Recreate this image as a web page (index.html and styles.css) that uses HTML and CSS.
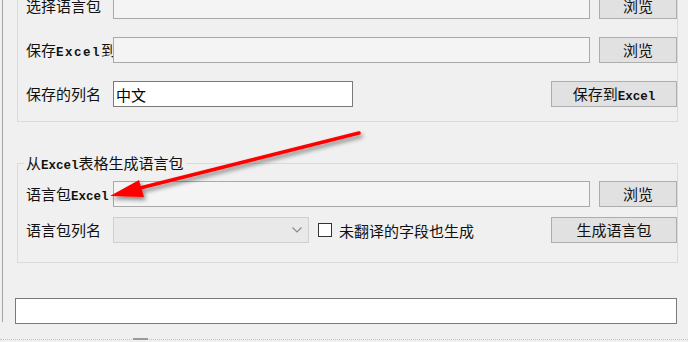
FILE: index.html
```html
<!DOCTYPE html>
<html lang="zh-CN">
<head>
    <meta charset="UTF-8">
    <meta name="viewport" content="width=device-width, initial-scale=1.0">
    <title>语言包工具</title>
    <link rel="stylesheet" href="styles.css">
</head>
<body>
    <div class="window">
        <fieldset class="group group-top">
            <div class="row">
                <span class="label">选择语言包</span>
                <div class="field"></div>
                <button class="btn">浏览</button>
            </div>
            <div class="row">
                <span class="label">保存<span class="latin latin-wide">Excel</span>到</span>
                <div class="field"></div>
                <button class="btn">浏览</button>
            </div>
            <div class="row">
                <span class="label">保存的列名</span>
                <input class="field field-white" type="text" value="中文">
                <button class="btn btn-wide">保存到<span class="latin">Excel</span></button>
            </div>
        </fieldset>

        <fieldset class="group group-gen">
            <legend>从<span class="latin">Excel</span>表格生成语言包</legend>
            <div class="row">
                <span class="label">语言包<span class="latin">Excel</span></span>
                <div class="field"></div>
                <button class="btn">浏览</button>
            </div>
            <div class="row">
                <span class="label">语言包列名</span>
                <div class="combo">
                    <svg width="10" height="6" viewBox="0 0 10 6"><path d="M0.5 0.5 L5 5 L9.5 0.5" fill="none" stroke="#8a8a8a" stroke-width="1.2"/></svg>
                </div>
                <span class="check"></span>
                <span class="check-label">未翻译的字段也生成</span>
                <button class="btn btn-wide">生成语言包</button>
            </div>
        </fieldset>

        <div class="status"></div>
        <div class="statusbar"><span class="grip"></span></div>
    </div>

    <!-- annotation arrow drawn over the form -->
    <svg class="arrow" width="688" height="342" viewBox="0 0 688 342">
        <defs>
            <filter id="shadow" x="-10%" y="-50%" width="120%" height="200%">
                <feDropShadow dx="2" dy="3" stdDeviation="2" flood-color="#000" flood-opacity="0.45"/>
            </filter>
        </defs>
        <g filter="url(#shadow)">
            <line x1="359" y1="133" x2="136" y2="189" stroke="#ff0000" stroke-width="3.5" stroke-linecap="round"/>
            <polygon points="110,196 139,180 144,197" fill="#ff0000"/>
        </g>
    </svg>
</body>
</html>
```

FILE: styles.css
```css
* {
    box-sizing: border-box;
}
html, body {
    margin: 0;
    height: 100%;
    overflow: hidden;
}
body {
    position: relative;
    background: #f0f0f0;
    font-family: "Noto Sans CJK SC", "Noto Sans", sans-serif;
    font-size: 15px;
    color: #111;
}
.window {
    height: 342px;
    margin-left: 2px;
    border-left: 1px solid #a3a3a3;
    padding-left: 14px;
}
.group {
    width: 661px;
    min-width: 0;
    margin: 0;
    border: 1px solid #dadada;
    padding: 0 0 0 8px;
}
.group-top {
    margin-top: -20px;
    padding-top: 12px;
    padding-bottom: 14px;
}
.group-gen {
    margin-top: 32px;
    padding-top: 9px;
    padding-bottom: 19px;
}
.group-gen legend {
    height: 18px;
    margin-left: -2px;
    padding: 0 2px;
    line-height: 18px;
}
.row {
    display: flex;
    align-items: center;
    height: 26px;
}
.row + .row {
    margin-top: 18px;
}
.group-gen .row + .row {
    margin-top: 10px;
}
.label {
    flex: none;
    width: 87px;
    white-space: nowrap;
    line-height: 18px;
}
.latin {
    font-family: "Liberation Mono", monospace;
    font-weight: bold;
    font-size: 12.5px;
    line-height: 1;
}
.latin-wide {
    letter-spacing: 1.5px;
}
.field {
    flex: none;
    width: 477px;
    height: 26px;
    margin: 0;
    border: 1px solid #a9a9a9;
    background: #f4f4f4;
}
.field-white {
    width: 240px;
    padding: 0 2px;
    border-color: #7a7a7a;
    background: #fff;
    font: inherit;
    color: #000;
    outline: none;
}
.btn {
    flex: none;
    width: 78px;
    height: 26px;
    margin-left: 9px;
    padding: 0;
    border: 1px solid #adadad;
    background: #e1e1e1;
    font: inherit;
    color: #111;
    line-height: 18px;
}
.btn-wide {
    width: 126px;
    margin-left: auto;
}
.combo {
    flex: none;
    display: flex;
    align-items: center;
    justify-content: flex-end;
    width: 196px;
    height: 26px;
    padding-right: 6px;
    border: 1px solid #d0d0d0;
    background: #e9e9e9;
}
.check {
    flex: none;
    width: 14px;
    height: 14px;
    margin-left: 9px;
    border: 1px solid #333;
    background: #fff;
}
.check-label {
    margin-left: 7px;
    white-space: nowrap;
}
.status {
    width: 662px;
    height: 26px;
    margin-top: 35px;
    margin-left: -2px;
    border: 1px solid #7a7a7a;
    background: #fff;
}
.statusbar {
    position: relative;
    width: 700px;
    margin-top: 15px;
    margin-left: -17px;
    border-top: 1px dotted #c4c4c4;
}
.grip {
    display: block;
    width: 15px;
    height: 2px;
    margin-left: 133px;
    margin-top: -2px;
    background: #9a9a9a;
}
.arrow {
    position: absolute;
    top: 0;
    left: 0;
    pointer-events: none;
}
```
